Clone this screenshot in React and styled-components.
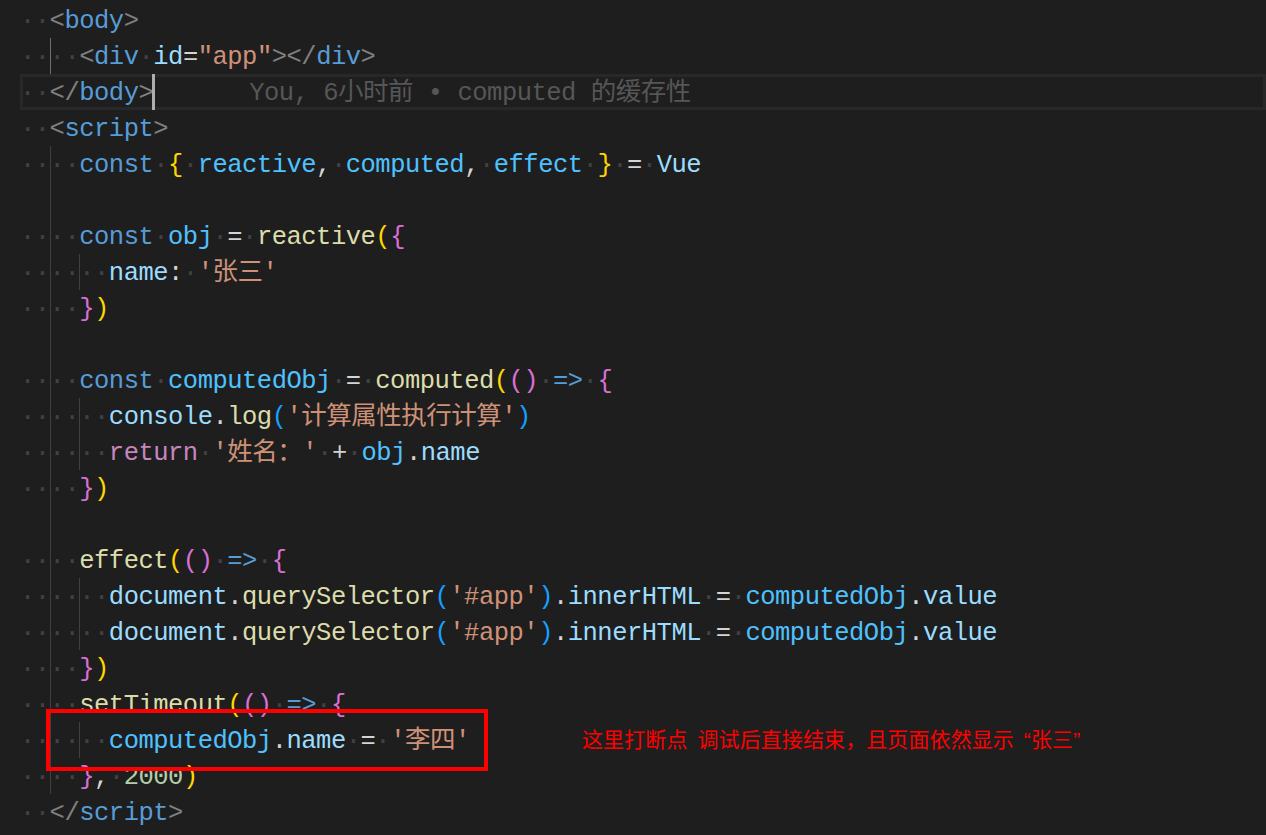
import React from "react";
import styled, { createGlobalStyle } from "styled-components";

const COL = 14.8;

const Global = createGlobalStyle`
  html, body { margin: 0; padding: 0; background: #1e1e1e; }
  #root { width: 1266px; height: 835px; }
`;

const C = {
  p: "#808080",
  tag: "#569cd6",
  attr: "#9cdcfe",
  str: "#ce9178",
  kw: "#569cd6",
  ctrl: "#c586c0",
  fn: "#dcdcaa",
  cst: "#4fc1ff",
  v: "#9cdcfe",
  op: "#d4d4d4",
  num: "#b5cea8",
  b1: "#ffd700",
  b2: "#da70d6",
  b3: "#179fff",
};

const Editor = styled.div`
  position: relative;
  box-sizing: border-box;
  width: 1266px;
  height: 835px;
  overflow: hidden;
  background: #1e1e1e;
  padding: 2px 0 0 20px;
  font-family: "Liberation Mono", "Noto Sans CJK SC", monospace;
  font-size: 25.5px;
  letter-spacing: -0.5px;
  color: #d4d4d4;
`;

const Line = styled.div`
  height: 36px;
  line-height: 39.5px;
  white-space: pre;
  box-sizing: border-box;
  background-image: ${(p) =>
    p.$guides.length
      ? p.$guides
          .map(([, a]) => {
            const c = a ? "#707070" : "#404040";
            return `linear-gradient(${c}, ${c})`;
          })
          .join(", ")
      : "none"};
  background-size: 1px 100%;
  background-repeat: no-repeat;
  background-position: ${(p) =>
    p.$guides.map(([col]) => `${(col * COL).toFixed(1)}px 0`).join(", ") || "0 0"};
  box-shadow: ${(p) => (p.$active ? "inset 0 0 0 3px #282828" : "none")};
`;

const Tok = styled.span`
  color: ${(p) => C[p.$t]};
`;

const Dot = styled.span`
  color: #424242;
`;

const Cursor = styled.span`
  display: inline-block;
  vertical-align: top;
  width: 3px;
  height: 36px;
  margin-left: -1px;
  background: #aeafad;
`;

const Blame = styled.span`
  color: #565656;
  margin-left: 94px;
`;

const RedBox = styled.div`
  position: absolute;
  left: 46px;
  top: 709px;
  width: 442px;
  height: 62px;
  box-sizing: border-box;
  border: 4px solid #ff0000;
`;

const Note = styled.div`
  position: absolute;
  left: 582px;
  top: 722px;
  line-height: 36px;
  font-family: "Liberation Sans", "Noto Sans CJK SC", sans-serif;
  font-size: 21px;
  letter-spacing: 0.1px;
  word-spacing: 4px;
  color: #ff0000;
  white-space: pre;
`;

const G2 = [[2, 0]];
const G24 = [[2, 0], [4, 0]];

const qs = [
  ["_", "      "], ["v", "document"], ["op", "."], ["fn", "querySelector"], ["b3", "("],
  ["str", "'#app'"], ["b3", ")"], ["op", "."], ["v", "innerHTML"], ["_", " "], ["op", "="],
  ["_", " "], ["cst", "computedObj"], ["op", "."], ["v", "value"],
];

const lines = [
  { t: [["_", "  "], ["p", "<"], ["tag", "body"], ["p", ">"]] },
  {
    g: [[2, 1]],
    t: [["_", "    "], ["p", "<"], ["tag", "div"], ["_", " "], ["attr", "id"], ["op", "="], ["str", '"app"'], ["p", "></"], ["tag", "div"], ["p", ">"]],
  },
  { active: true, cursor: true, t: [["_", "  "], ["p", "</"], ["tag", "body"], ["p", ">"]] },
  { t: [["_", "  "], ["p", "<"], ["tag", "script"], ["p", ">"]] },
  {
    g: G2,
    t: [["_", "    "], ["kw", "const"], ["_", " "], ["b1", "{"], ["_", " "], ["cst", "reactive"], ["op", ","], ["_", " "], ["cst", "computed"], ["op", ","], ["_", " "], ["cst", "effect"], ["_", " "], ["b1", "}"], ["_", " "], ["op", "="], ["_", " "], ["v", "Vue"]],
  },
  { g: G2, t: [] },
  {
    g: G2,
    t: [["_", "    "], ["kw", "const"], ["_", " "], ["cst", "obj"], ["_", " "], ["op", "="], ["_", " "], ["fn", "reactive"], ["b1", "("], ["b2", "{"]],
  },
  { g: G24, t: [["_", "      "], ["v", "name"], ["op", ":"], ["_", " "], ["str", "'张三'"]] },
  { g: G2, t: [["_", "    "], ["b2", "}"], ["b1", ")"]] },
  { g: G2, t: [] },
  {
    g: G2,
    t: [["_", "    "], ["kw", "const"], ["_", " "], ["cst", "computedObj"], ["_", " "], ["op", "="], ["_", " "], ["fn", "computed"], ["b1", "("], ["b2", "()"], ["_", " "], ["kw", "=>"], ["_", " "], ["b2", "{"]],
  },
  { g: G24, t: [["_", "      "], ["v", "console"], ["op", "."], ["fn", "log"], ["b3", "("], ["str", "'计算属性执行计算'"], ["b3", ")"]] },
  { g: G24, t: [["_", "      "], ["ctrl", "return"], ["_", " "], ["str", "'姓名：'"], ["_", " "], ["op", "+"], ["_", " "], ["cst", "obj"], ["op", "."], ["v", "name"]] },
  { g: G2, t: [["_", "    "], ["b2", "}"], ["b1", ")"]] },
  { g: G2, t: [] },
  { g: G2, t: [["_", "    "], ["fn", "effect"], ["b1", "("], ["b2", "()"], ["_", " "], ["kw", "=>"], ["_", " "], ["b2", "{"]] },
  { g: G24, t: qs },
  { g: G24, t: qs },
  { g: G2, t: [["_", "    "], ["b2", "}"], ["b1", ")"]] },
  { g: G2, t: [["_", "    "], ["fn", "setTimeout"], ["b1", "("], ["b2", "()"], ["_", " "], ["kw", "=>"], ["_", " "], ["b2", "{"]] },
  { g: G24, t: [["_", "      "], ["cst", "computedObj"], ["op", "."], ["v", "name"], ["_", " "], ["op", "="], ["_", " "], ["str", "'李四'"]] },
  { g: G2, t: [["_", "    "], ["b2", "}"], ["op", ","], ["_", " "], ["num", "2000"], ["b1", ")"]] },
  { t: [["_", "  "], ["p", "</"], ["tag", "script"], ["p", ">"]] },
];

function renderToken([type, text], i) {
  if (type === "_") {
    return <Dot key={i}>{"·".repeat(text.length)}</Dot>;
  }
  return (
    <Tok key={i} $t={type}>
      {text}
    </Tok>
  );
}

export default function App() {
  return (
    <>
      <Global />
      <Editor>
        {lines.map((ln, i) => (
          <Line key={i} $guides={ln.g || []} $active={!!ln.active}>
            {ln.t.map(renderToken)}
            {ln.cursor && (
              <>
                <Cursor />
                <Blame>You, 6小时前 • computed 的缓存性</Blame>
              </>
            )}
          </Line>
        ))}
        <RedBox />
        <Note>这里打断点 调试后直接结束，且页面依然显示 “张三”</Note>
      </Editor>
    </>
  );
}
